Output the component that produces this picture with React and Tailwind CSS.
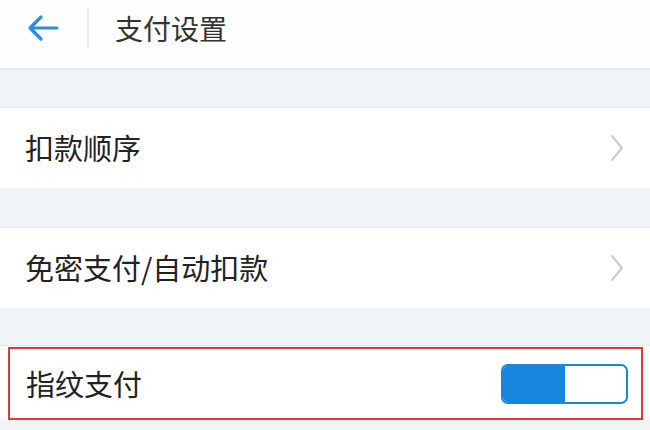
const ChevronRight = () => (
  <svg width="14" height="28" viewBox="0 0 14 28" fill="none">
    <path d="M2 2 L12 14 L2 26" stroke="#c9ccd1" strokeWidth="2" strokeLinecap="round" strokeLinejoin="round" />
  </svg>
);

const BackArrow = () => (
  <svg width="32" height="28" viewBox="0 0 32 28" fill="none">
    <path d="M30 14 H4 M14 3 L3 14 L14 25" stroke="#2a8ce2" strokeWidth="3.2" strokeLinecap="round" strokeLinejoin="round" />
  </svg>
);

const Gap = ({ h }) => (
  <div className={`${h} bg-[#f1f4f7] border-b border-[#e6e9ed]`} />
);

const Row = ({ label, children }) => (
  <div className="flex h-[80px] items-center justify-between bg-white pl-[25px] pr-[26px]">
    <span className="text-[29px] text-[#222]">{label}</span>
    {children}
  </div>
);

export default function App() {
  return (
    <div
      className="flex h-[430px] w-[650px] flex-col overflow-hidden bg-[#f1f4f7]"
      style={{ fontFamily: '"Noto Sans CJK SC", "Noto Sans", sans-serif' }}
    >
      {/* header */}
      <div className="flex h-[70px] items-start border-b-2 border-[#e4e7eb] bg-[#fdfdfe]">
        <div className="flex h-[56px] items-center">
          <div className="ml-[27px] w-[60px]">
            <BackArrow />
          </div>
          <div className="h-[41px] w-[2px] bg-[#eceef1]" />
          <span className="ml-[26px] text-[28px] leading-none text-[#333]">支付设置</span>
        </div>
      </div>

      <Gap h="h-[38px]" />
      <Row label="扣款顺序">
        <ChevronRight />
      </Row>

      <Gap h="h-[40px]" />
      <Row label="免密支付/自动扣款">
        <ChevronRight />
      </Row>

      <Gap h="h-[38px]" />
      <div className="bg-white pl-[8px] pr-[7px] pt-[1px]">
        <div className="flex h-[73px] items-center justify-between border-2 border-[#e0393e] pl-[16px] pr-[13px]">
          <span className="text-[29px] text-[#222]">指纹支付</span>
          <div className="flex h-[40px] w-[127px] overflow-hidden rounded-[7px] border-2 border-[#1686de] bg-white">
            <div className="w-[62px] bg-[#1686de]" />
            <div className="flex-1 rounded-[6px] bg-white" />
          </div>
        </div>
      </div>
    </div>
  );
}
